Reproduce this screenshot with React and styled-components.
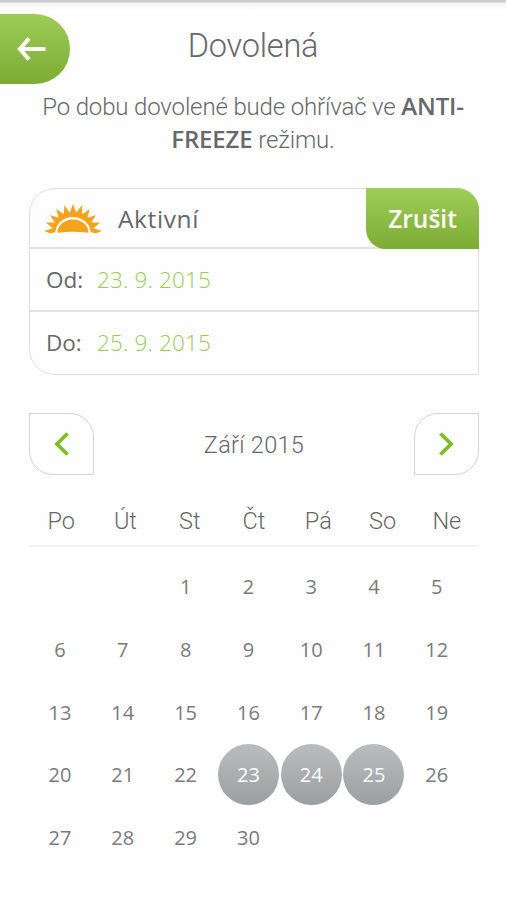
import styled, { createGlobalStyle } from 'styled-components';

const WEEKDAYS = ['Po', 'Út', 'St', 'Čt', 'Pá', 'So', 'Ne'];
const DAYS = Array.from({ length: 30 }, (_, i) => i + 1);
const SELECTED = [23, 24, 25];
const RAY_COUNT = 11;

const SunIcon = () => {
  const rays = Array.from({ length: RAY_COUNT }, (_, i) => {
    const mid = 0.04 + (i * (Math.PI - 0.08)) / (RAY_COUNT - 1);
    const point = (angle, rx, ry) =>
      `${(29 - rx * Math.cos(angle)).toFixed(1)},${(28 - ry * Math.sin(angle)).toFixed(1)}`;
    return `${point(mid - 0.17, 20, 19)} ${point(mid, 29, 28)} ${point(mid + 0.17, 20, 19)}`;
  });
  return (
    <Sun viewBox="0 0 58 29">
      <path d="M8 28A21 20.5 0 0 1 50 28L46.5 28.5A17.5 15.5 0 0 0 11.5 28.5Z" />
      {rays.map((points) => (
        <polygon key={points} points={points} />
      ))}
      <path className="gap" d="M11.5 29A17.5 15.2 0 0 1 46.5 29Z" />
      <path d="M13.5 28.8A15.5 13.4 0 0 1 44.5 28.8Q29 26.8 13.5 28.8Z" />
    </Sun>
  );
};

const App = () => {
  return (
    <>
      <GlobalStyle />
      <Screen>
        <TopBar>
          <BackButton aria-label="Zpět">
            <svg width="30" height="26" viewBox="0 0 30 26">
              <path d="M13 2.5L4 13L13 23.5M4.5 13H29.5" fill="none" stroke="#fff" strokeWidth="4.2" />
            </svg>
          </BackButton>
          <Title>Dovolená</Title>
        </TopBar>
        <Description>
          Po dobu dovolené bude ohřívač ve <strong>ANTI-</strong>
          <br />
          <strong>FREEZE</strong> režimu.
        </Description>

        <Card>
          <StatusRow>
            <SunIcon />
            <Status>Aktivní</Status>
            <CancelButton>Zrušit</CancelButton>
          </StatusRow>
          <DateRow>
            <DateLabel>Od:</DateLabel>
            <DateValue>23. 9. 2015</DateValue>
          </DateRow>
          <DateRow>
            <DateLabel>Do:</DateLabel>
            <DateValue>25. 9. 2015</DateValue>
          </DateRow>
        </Card>

        <MonthBar>
          <ArrowButton aria-label="Předchozí měsíc">
            <Chevron viewBox="0 0 16 24"><path d="M13.5 1.5L3 12L13.5 22.5" /></Chevron>
          </ArrowButton>
          <Month>Září 2015</Month>
          <ArrowButton $next aria-label="Další měsíc">
            <Chevron viewBox="0 0 16 24"><path d="M1.5 1.5L12 12L1.5 22.5" /></Chevron>
          </ArrowButton>
        </MonthBar>

        <Weekdays>
          {WEEKDAYS.map((name) => <span key={name}>{name}</span>)}
        </Weekdays>
        <Days>
          {DAYS.map((day) => (
            <Day key={day} $first={day === 1} $selected={SELECTED.includes(day)}>{day}</Day>
          ))}
        </Days>
      </Screen>
    </>
  );
};

const GlobalStyle = createGlobalStyle`
  * {
    box-sizing: border-box;
  }

  body {
    margin: 0;
    background: #fefefe;
    color: #67686a;
    font-family: Roboto, 'Open Sans', sans-serif;
  }

  button {
    padding: 0;
    border: 0;
    background: none;
    color: inherit;
    font: inherit;
  }
`;

const Screen = styled.main`
  width: 506px;
  height: 900px;
  overflow: hidden;
  background: linear-gradient(#cbcbcb 0 2px, #f5f5f5 3px, #fefefe 10px);
`;

const TopBar = styled.header`
  display: grid;
  grid-template-columns: 70px 1fr 70px;
  padding-top: 14px;
`;

const BackButton = styled.button`
  display: flex;
  align-items: center;
  width: 70px;
  height: 70px;
  padding-left: 16px;
  border-radius: 0 35px 35px 0;
  background: linear-gradient(#9ccb57, #7dac35);
`;

const Title = styled.h1`
  margin: 0;
  font-size: 32.5px;
  font-weight: 300;
  letter-spacing: -0.2px;
  line-height: 64px;
  text-align: center;
`;

const Description = styled.p`
  height: 66px;
  margin: 7px 0 0;
  font-size: 24px;
  font-weight: 300;
  letter-spacing: -0.15px;
  line-height: 33px;
  text-align: center;
  white-space: nowrap;

  strong {
    font-family: 'Open Sans', sans-serif;
    font-size: 24px;
    font-weight: 600;
    line-height: 0;
  }
`;

const Card = styled.section`
  width: 450px;
  height: 187px;
  margin: 31px 0 0 29px;
  border: 1px solid #dfdfdf;
  border-radius: 26px 22px 0 26px;
  font-family: 'Open Sans', sans-serif;
`;

const StatusRow = styled.div`
  display: flex;
  align-items: center;
  height: 58px;
  padding-left: 14px;
`;

const Sun = styled.svg`
  width: 58px;
  height: 29px;
  fill: #f5a31c;

  .gap {
    fill: #fefefe;
  }
`;

const Status = styled.span`
  flex: 1;
  margin-left: 16px;
  font-size: 24.5px;
  font-weight: 400;
  letter-spacing: 0.6px;
`;

const CancelButton = styled.button`
  width: 113px;
  height: 61px;
  margin: 0 -1px 0 0;
  border-radius: 0 22px 0 20px;
  background: linear-gradient(#9ecd59, #7dac35);
  color: #fff;
  font-size: 24.5px;
  font-weight: 600;
`;

const DateRow = styled.div`
  display: flex;
  align-items: center;
  height: 63px;
  padding-left: 16px;
  border-top: 2px solid #e2e2e2;
  font-size: 22.5px;
`;

const DateLabel = styled.span`
  width: 51px;
`;

const DateValue = styled.span`
  color: #9acb56;
  font-weight: 300;
  letter-spacing: 0.15px;
`;

const MonthBar = styled.nav`
  display: flex;
  align-items: center;
  justify-content: space-between;
  width: 450px;
  margin: 38px 0 0 29px;
`;

const ArrowButton = styled.button`
  display: flex;
  align-items: center;
  justify-content: center;
  width: 65px;
  height: 62px;
  border: 1px solid #d5d5d5;
  border-radius: ${({ $next }) => ($next ? '24px 0 24px 0' : '0 24px 0 24px')};
`;

const Chevron = styled.svg`
  width: 16px;
  height: 24px;
  fill: none;
  stroke: #80bd25;
  stroke-width: 3.8;
`;

const Month = styled.h2`
  margin: 0;
  padding-top: 2px;
  font-size: 23.5px;
  font-weight: 300;
  letter-spacing: 0.3px;
`;

const Weekdays = styled.div`
  display: grid;
  grid-template-columns: repeat(7, 1fr);
  width: 450px;
  height: 72px;
  margin-left: 29px;
  padding-top: 30px;
  border-bottom: 2px solid #f2f2f2;
  font-size: 23.5px;
  font-weight: 300;
  line-height: 32px;
  text-align: center;
`;

const Days = styled.div`
  display: grid;
  grid-template-columns: repeat(7, 61px);
  grid-auto-rows: 61px;
  gap: 1.8px;
  margin: 9px 0 0 29.5px;
`;

const Day = styled.div`
  display: flex;
  align-items: center;
  justify-content: center;
  ${({ $first }) => $first && 'grid-column-start: 3;'}
  border-radius: 50%;
  color: #7a7b7d;
  font-family: 'Open Sans', sans-serif;
  font-size: 20px;
  ${({ $selected }) => $selected && `
    background: linear-gradient(#babcbd, #9c9ea0);
    color: #fff;
  `}
`;

export default App;
